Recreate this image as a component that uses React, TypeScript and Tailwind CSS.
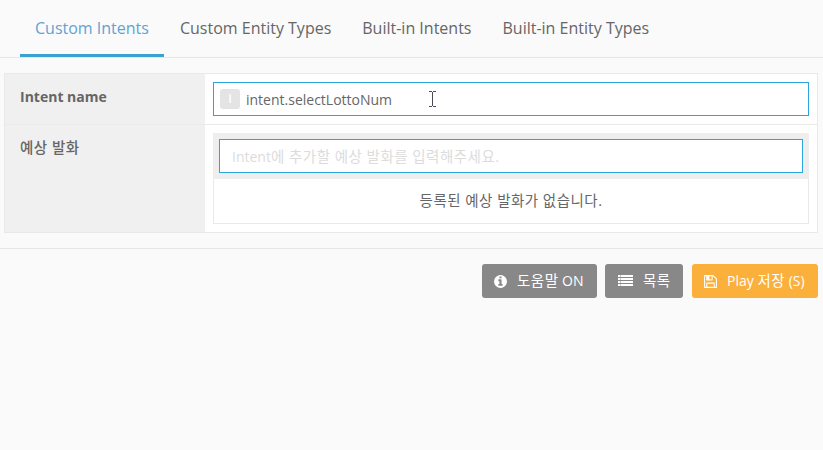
import type { ReactNode } from "react";

const tabs = [
  { label: "Custom Intents", active: true },
  { label: "Custom Entity Types", active: false },
  { label: "Built-in Intents", active: false },
  { label: "Built-in Entity Types", active: false },
];

function Ko({ children }: { children: ReactNode }) {
  return <span className="text-[14.5px] leading-none tracking-[0.48px]">{children}</span>;
}

function InfoIcon() {
  return (
    <svg viewBox="0 0 1536 1792" className="h-[15px] w-[13px]" fill="currentColor">
      <path d="M1024 1376v-160q0-14-9-23t-23-9h-96v-512q0-14-9-23t-23-9h-320q-14 0-23 9t-9 23v160q0 14 9 23t23 9h96v320h-96q-14 0-23 9t-9 23v160q0 14 9 23t23 9h448q14 0 23-9t9-23zM896 480v-160q0-14-9-23t-23-9h-192q-14 0-23 9t-9 23v160q0 14 9 23t23 9h192q14 0 23-9t9-23zM1536 896q0 209-103 385.5t-279.5 279.5-385.5 103-385.5-103-279.5-279.5-103-385.5 103-385.5 279.5-279.5 385.5-103 385.5 103 279.5 279.5 103 385.5z" />
    </svg>
  );
}

function ListIcon() {
  return (
    <svg viewBox="0 0 15 16" className="h-4 w-[15px]" fill="currentColor">
      {[2, 5, 8, 11].map((y) => (
        <g key={y}>
          <rect x="0" y={y} width="2.3" height="2" />
          <rect x="2.7" y={y} width="12.3" height="2" />
        </g>
      ))}
    </svg>
  );
}

function SaveIcon() {
  return (
    <svg viewBox="0 0 1536 1792" className="h-[15px] w-[13px]" fill="currentColor">
      <path d="M384 1536h768v-384h-768v384zM1280 1536h128v-896q0-14-10-38.5t-20-34.5l-281-281q-10-10-34-20t-39-10v416q0 40-28 68t-68 28h-576q-40 0-68-28t-28-68v-416h-128v1280h128v-416q0-40 28-68t68-28h832q40 0 68 28t28 68v416zM896 608v-320q0-13-9.5-22.5t-22.5-9.5h-192q-13 0-22.5 9.5t-9.5 22.5v320q0 13 9.5 22.5t22.5 9.5h192q13 0 22.5-9.5t9.5-22.5zM1536 640v928q0 40-28 68t-68 28h-1344q-40 0-68-28t-28-68v-1344q0-40 28-68t68-28h928q40 0 88 20t76 48l280 280q28 28 48 76t20 88z" />
    </svg>
  );
}

function TextCursor() {
  return (
    <svg viewBox="0 0 7 16" className="ml-[37px] h-4 w-[7px]" fill="#4b4b55" shapeRendering="crispEdges">
      <rect x="0" y="0" width="3" height="1" />
      <rect x="4" y="0" width="3" height="1" />
      <rect x="3" y="1" width="1" height="14" />
      <rect x="0" y="15" width="3" height="1" />
      <rect x="4" y="15" width="3" height="1" />
    </svg>
  );
}

function Button({ icon, children, className }: { icon: ReactNode; children: ReactNode; className: string }) {
  return (
    <button
      className={`flex h-[34px] items-center gap-[10px] rounded-[3px] text-[14px] leading-5 whitespace-nowrap text-white ${className}`}
    >
      {icon}
      <span>{children}</span>
    </button>
  );
}

export default function App() {
  return (
    <div className="h-[450px] w-[823px] overflow-hidden bg-[#fafafa] font-['Open_Sans','Noto_Sans_CJK_KR',sans-serif] text-[14px] text-[#666]">
      <nav className="flex h-[58px] border-b border-[#e7e7e7] pl-5">
        {tabs.map((tab) => (
          <a
            key={tab.label}
            className={`mr-px flex h-[57px] items-center border-b-3 px-[15px] pt-px text-[16px] leading-6 whitespace-nowrap ${
              tab.active ? "border-[#3ba1d3] text-[#5fa3d3]" : "border-transparent"
            }`}
          >
            {tab.label}
          </a>
        ))}
      </nav>

      <section className="mt-[15px] mr-[5px] ml-1 h-40 border border-[#e9e9e9] bg-white">
        <div className="flex h-[51px] border-b border-[#e9e9e9]">
          <div className="w-[200px] bg-[#f0f0f0] pt-[13px] pl-[15px] font-bold leading-5">Intent name</div>
          <div className="flex-1 p-2">
            <div className="flex h-[34px] items-center border border-[#2ba5dc] pl-[6px]">
              <span className="flex size-5 items-center justify-center rounded-[3px] bg-[#e4e4e4] text-[12px] font-semibold text-white">
                I
              </span>
              <span className="ml-[6px]">intent.selectLottoNum</span>
              <TextCursor />
            </div>
          </div>
        </div>
        <div className="flex h-[107px]">
          <div className="w-[200px] bg-[#f0f0f0] pt-[13px] pl-[15px] font-medium leading-5">
            <Ko>예상 발화</Ko>
          </div>
          <div className="flex-1 p-2">
            <div className="h-[91px] border border-[#e9e9e9]">
              <div className="-mx-px -mt-px h-[46px] bg-[#eeeeef] p-[6px]">
                <div className="flex h-[34px] items-center border border-[#2ba5dc] bg-white pl-3 text-[#dcdcdc]">
                  <span>
                    Intent<Ko>에 추가할 예상 발화를 입력해주세요.</Ko>
                  </span>
                </div>
              </div>
              <div className="flex h-[43px] items-center justify-center">
                <span>
                  <Ko>등록된 예상 발화가 없습니다.</Ko>
                </span>
              </div>
            </div>
          </div>
        </div>
      </section>

      <footer className="mt-[15px] flex border-t border-[#e7e7e7] pt-[15px] pl-[482px]">
        <Button icon={<InfoIcon />} className="w-[115px] bg-[#888] pl-3">
          <Ko>도움말</Ko> ON
        </Button>
        <Button icon={<ListIcon />} className="ml-2 w-[78px] bg-[#888] pl-[13px]">
          <Ko>목록</Ko>
        </Button>
        <Button icon={<SaveIcon />} className="ml-[9px] w-[126px] bg-[#fbb03b] pl-3">
          Play <Ko>저장</Ko> (S)
        </Button>
      </footer>
    </div>
  );
}
